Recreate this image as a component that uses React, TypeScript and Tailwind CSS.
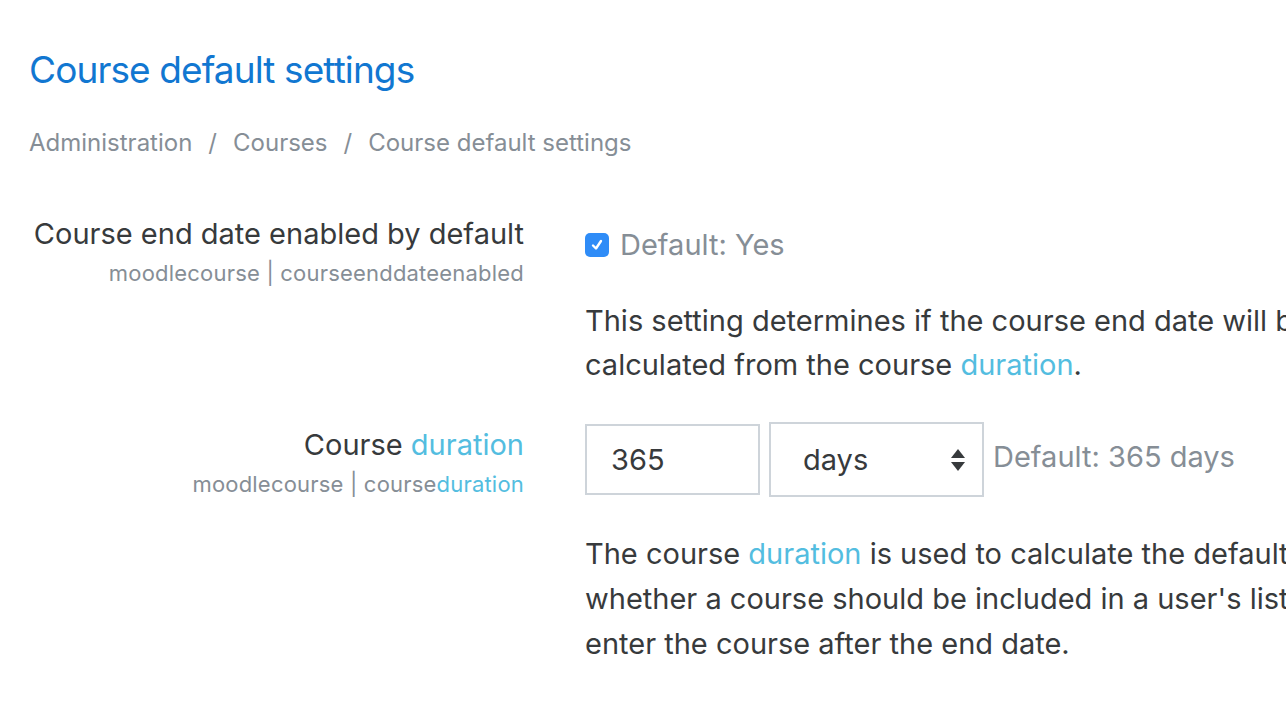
const muted = 'text-[#868e96]';
const hl = 'text-[#53bde0]';

const Checkbox = () => (
  <span className="inline-flex h-[24px] w-[24px] items-center justify-center rounded-[5px] bg-[#2f8cf7]">
    <svg width="16" height="16" viewBox="0 0 16 16" fill="none">
      <path d="M4 8.5 L7 11.5 L12 4" stroke="#ffffff" strokeWidth="2.4" strokeLinecap="round" strokeLinejoin="round" />
    </svg>
  </span>
);

const SelectArrows = () => (
  <svg width="16" height="24" viewBox="0 0 16 24">
    <path d="M8 1 L15 10 L1 10 Z" fill="#373a3c" />
    <path d="M8 23 L15 14 L1 14 Z" fill="#373a3c" />
  </svg>
);

export default function App() {
  return (
    <div
      className="h-[710px] w-[1286px] overflow-hidden bg-white pl-[29px] text-[#373a3c]"
      style={{ fontFamily: 'Inter, "Liberation Sans", sans-serif' }}
    >
      <h1 className="pt-[47px] text-[37px] leading-[46px] font-normal tracking-[-0.9px] text-[#1177d1]">Course default settings</h1>
      <nav className={`mt-[35px] text-[24px] leading-[30px] ${muted}`}>
        <span>Administration</span>
        <span className="mx-[16px]">/</span>
        <span>Courses</span>
        <span className="mx-[16px]">/</span>
        <span>Course default settings</span>
      </nav>

      <div className="mt-[53px] flex">
        <div className="w-[495px] shrink-0 text-right">
          <div className="text-[29px] leading-[45px]">Course end date enabled by default</div>
          <div className={`mt-[2px] text-[22px] leading-[30px] tracking-[0.2px] ${muted}`}>moodlecourse | courseenddateenabled</div>
        </div>
        <div className="ml-[61px] shrink-0 pt-[11px]">
          <label className={`flex h-[45px] items-center gap-[11px] text-[29px] ${muted}`}>
            <Checkbox />
            <span>Default: Yes</span>
          </label>
          <p className="mt-[32px] whitespace-nowrap text-[29px] leading-[44px]">
            This setting determines if the course end date will be enabled by default for new courses and set to the date
            <br />
            calculated from the course <span className={hl}>duration</span>.
          </p>
        </div>
      </div>

      <div className="mt-[35px] flex">
        <div className="w-[495px] shrink-0 text-right">
          <div className="text-[29px] leading-[45px]">
            Course <span className={hl}>duration</span>
          </div>
          <div className={`mt-[2px] text-[22px] leading-[30px] tracking-[0.2px] ${muted}`}>
            moodlecourse | course<span className={hl}>duration</span>
          </div>
        </div>
        <div className="ml-[61px] shrink-0">
          <div className="flex items-center">
            <div className="flex h-[71px] w-[175px] items-center border-2 border-[#ced4da] px-[24px] text-[29px]">365</div>
            <div className="ml-[9px] flex h-[75px] w-[215px] items-center justify-between border-2 border-[#ced4da] pr-[16px] pl-[32px] text-[29px]">
              <span>days</span>
              <SelectArrows />
            </div>
            <span className={`ml-[9px] -mt-[6px] text-[29px] ${muted}`}>Default: 365 days</span>
          </div>
          <p className="mt-[34px] whitespace-nowrap text-[29px] leading-[45px]">
            The course <span className={hl}>duration</span> is used to calculate the default course end date, which is used to determine
            <br />
            whether a course should be included in a user's list of courses. Users can still
            <br />
            enter the course after the end date.
          </p>
        </div>
      </div>
    </div>
  );
}
